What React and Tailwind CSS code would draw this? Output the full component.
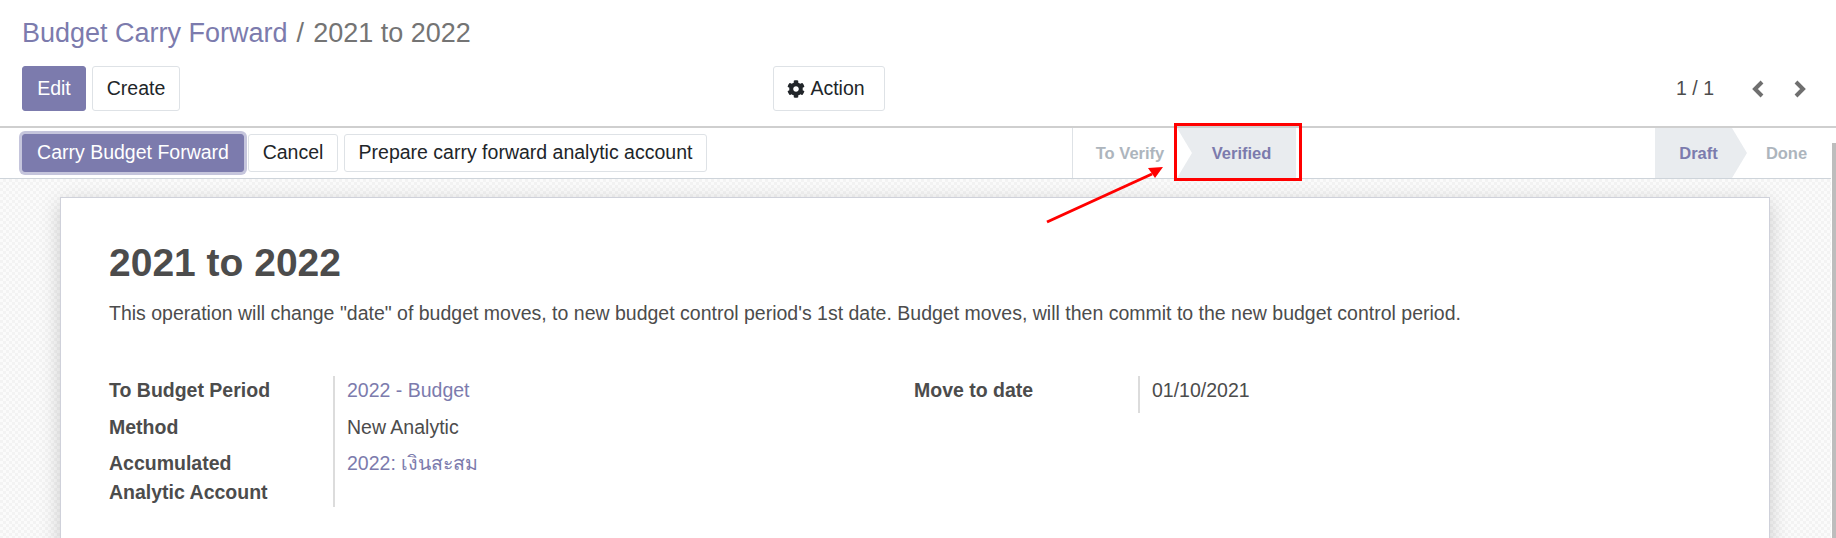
import React from 'react';
import { FaCog } from 'react-icons/fa';

const btn = 'rounded-[3px] border text-[19.5px] leading-none flex items-center justify-center';
const white = `${btn} bg-white border-[#dee2e6] text-[#212529]`;
const primary = `${btn} bg-[#7c7bad] border-[#7c7bad] text-white`;

function Arrow({ fill, left }) {
    return (
        <svg width="15" height="50" viewBox="0 0 15 50" className="absolute top-0 h-[50px]" style={{ left }}>
            <path d="M0 0 L15 25 L0 50 Z" fill={fill} />
        </svg>
    );
}

function Chevron({ points, className }) {
    return (
        <svg width="13" height="18" viewBox="0 0 13 18" className={className}>
            <polyline points={points} fill="none" stroke="#6f6f6f" strokeWidth="4" />
        </svg>
    );
}

function Field({ label, children, className = '', last = false }) {
    return (
        <div className={`flex ${className}`}>
            <div className={`w-[226px] font-bold text-[#4c4c4c] text-[19.5px] leading-[29.25px] pr-4 border-r-2 border-[#dcdcdc] ${last ? '' : 'pb-[7px]'}`}>{label}</div>
            <div className="pl-[12px] text-[19.5px] leading-[29.25px] text-[#4c4c4c]">{children}</div>
        </div>
    );
}

export default function App() {
    return (
        <div className="h-[538px] overflow-hidden flex flex-col bg-white relative font-['Liberation_Sans','Noto_Sans',sans-serif]">
            {/* Control panel */}
            <header className="h-[128px] border-b-2 border-[#cfcfcf] px-[22px] pt-[16px]">
                <div className="text-[27px] leading-[34px] text-[#747474]">
                    <span className="text-[#7c7bad]">Budget Carry Forward</span>
                    <span className="ml-[9px] mr-[9px]">/</span>
                    <span>2021 to 2022</span>
                </div>
                <div className="mt-[16px] flex items-center h-[45px]">
                    <div className="flex gap-[6px] w-[751px]">
                        <button className={`${primary} w-[64px] h-[45px]`}>Edit</button>
                        <button className={`${white} w-[88px] h-[45px]`}>Create</button>
                    </div>
                    <button className={`${white} w-[112px] h-[45px] gap-[5px] pr-[6px]`}>
                        <FaCog size={18} />
                        Action
                    </button>
                    <div className="ml-auto flex items-center text-[19.5px] text-[#4c4c4c]">
                        <span className="mr-[37px]">1 / 1</span>
                        <Chevron points="11,2 4,9 11,16" className="mr-[30px]" />
                        <Chevron points="2,2 9,9 2,16" className="mr-[7px]" />
                    </div>
                </div>
            </header>

            <div className="flex-1 flex min-h-0">
                <div className="flex-1 flex flex-col min-w-0">
                    {/* Status bar */}
                    <div className="h-[51px] bg-white border-b border-[#ced4da] flex items-center pl-[22px]">
                        <div className="flex items-center">
                            <button className={`${primary} w-[222px] h-[38px] ring-[3px] ring-[#c5c5dc]`}>Carry Budget Forward</button>
                            <button className={`${white} w-[90px] h-[38px] ml-[4px]`}>Cancel</button>
                            <button className={`${white} w-[363px] h-[38px] ml-[6px]`}>Prepare carry forward analytic account</button>
                        </div>
                        <div className="ml-auto h-full flex text-[16.5px] font-bold">
                            <div className="w-[105px] border-l border-[#dee2e6] flex items-center justify-center text-[#adb5bd] h-[50px] pl-[10px]">To Verify</div>
                            <div className="relative w-[119px] bg-[#e9ecef] flex items-center justify-center text-[#7c7bad] h-[50px] pl-[10px]">
                                <Arrow fill="#ffffff" left={0} />
                                Verified
                            </div>
                            <div className="w-[359px]"></div>
                            <div className="relative w-[77px] bg-[#e9ecef] flex items-center justify-center text-[#7c7bad] h-[50px] pl-[10px]">
                                Draft
                                <Arrow fill="#e9ecef" left={77} />
                            </div>
                            <div className="w-[99px] flex items-center justify-center text-[#adb5bd] h-[50px] pl-[10px]">Done</div>
                        </div>
                    </div>

                    {/* Sheet */}
                    <div className="flex-1 min-h-0 overflow-hidden bg-[repeating-conic-gradient(#f3f3f3_0_25%,#fbfbfb_0_50%)] bg-[length:6px_6px] pt-[18px] pl-[60px] pr-[60px]">
                        <div className="w-[1710px] h-[400px] bg-white border border-[#cfd1da] shadow-[0_5px_20px_-1px_rgba(0,0,0,0.2)] pt-[41px] pl-[48px]">
                            <h1 className="text-[39px] leading-[47px] font-bold text-[#4c4c4c]">2021 to 2022</h1>
                            <p className="mt-[13px] text-[19.5px] leading-[29.25px] text-[#4c4c4c]">
                                This operation will change "date" of budget moves, to new budget control period's 1st date. Budget moves, will then commit to the new budget control period.
                            </p>
                            <div className="mt-[48px] flex">
                                <div className="w-[805px]">
                                    <Field label="To Budget Period"><span className="text-[#7c7bad]">2022 - Budget</span></Field>
                                    <Field label="Method">New Analytic</Field>
                                    <Field last label={<>Accumulated<br />Analytic Account</>}>
                                        <span className="text-[#7c7bad]">2022: เงินสะสม</span>
                                    </Field>
                                </div>
                                <Field label="Move to date" className="h-[37px]">01/10/2021</Field>
                            </div>
                        </div>
                    </div>
                </div>

                {/* Scrollbar */}
                <div className="w-[5px] bg-white flex flex-col pt-[15px] pl-[1px]">
                    <div className="flex-1 bg-[#bdbdbd]"></div>
                </div>
            </div>

            {/* Screenshot annotation */}
            <div className="absolute left-[1174px] top-[123px] w-[128px] h-[58px] border-[3px] border-[#ff0000]"></div>
            <svg className="absolute left-[1040px] top-[160px]" width="140" height="80" viewBox="0 0 140 80">
                <line x1="7" y1="62" x2="112" y2="14" stroke="#ff0000" strokeWidth="3" />
                <path d="M123 7 L108 8 L115 18 Z" fill="#ff0000" />
            </svg>
        </div>
    );
}
